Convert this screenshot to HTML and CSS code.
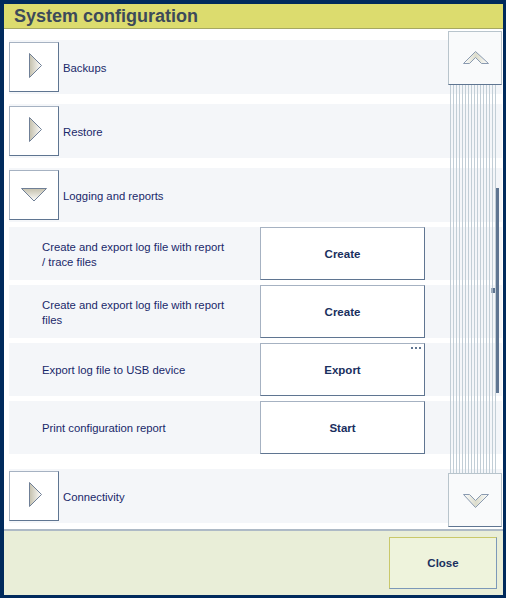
FILE: index.html
```html
<!DOCTYPE html>
<html>
<head>
<meta charset="utf-8">
<link rel="stylesheet" href="styles.css">
</head>
<body>
<div class="frame">
  <header class="titlebar">System configuration</header>
  <main class="content">
    <div class="list">
      <div class="row">
        <button class="exp"><svg width="48" height="48" viewBox="0 0 48 48"><defs><linearGradient id="gr1" x1="0" x2="1" y1="0" y2="0"><stop offset="0" stop-color="#c4c0ac"/><stop offset="1" stop-color="#ffffff"/></linearGradient></defs><polygon points="19.5,10.5 31.5,22.5 19.5,34.5" fill="url(#gr1)" stroke="#6f7f96" stroke-width="1"/></svg></button>
        <span class="label">Backups</span>
      </div>
      <div class="row">
        <button class="exp"><svg width="48" height="48" viewBox="0 0 48 48"><polygon points="19.5,10.5 31.5,22.5 19.5,34.5" fill="url(#gr1)" stroke="#6f7f96" stroke-width="1"/></svg></button>
        <span class="label">Restore</span>
      </div>
      <div class="row row-open">
        <button class="exp"><svg width="48" height="48" viewBox="0 0 48 48"><defs><linearGradient id="gr2" x1="0" x2="0" y1="0" y2="1"><stop offset="0" stop-color="#c4c0ac"/><stop offset="1" stop-color="#ffffff"/></linearGradient></defs><polygon points="11.5,17.5 36.5,17.5 24,30" fill="url(#gr2)" stroke="#6f7f96" stroke-width="1"/></svg></button>
        <span class="label">Logging and reports</span>
      </div>
      <div class="sub">
        <div class="subrow">
          <span class="sublabel">Create and export log file with report<br>/ trace files</span>
          <button class="act">Create</button>
        </div>
        <div class="subrow">
          <span class="sublabel">Create and export log file with report<br>files</span>
          <button class="act">Create</button>
        </div>
        <div class="subrow">
          <span class="sublabel">Export log file to USB device</span>
          <button class="act act-more">Export<span class="dots"><i></i><i></i><i></i></span></button>
        </div>
        <div class="subrow">
          <span class="sublabel">Print configuration report</span>
          <button class="act">Start</button>
        </div>
      </div>
      <div class="row">
        <button class="exp"><svg width="48" height="48" viewBox="0 0 48 48"><polygon points="19.5,10.5 31.5,22.5 19.5,34.5" fill="url(#gr1)" stroke="#6f7f96" stroke-width="1"/></svg></button>
        <span class="label">Connectivity</span>
      </div>
    </div>
    <div class="scrollbar">
      <button class="sbtn sbtn-up"><svg width="52" height="52" viewBox="0 0 52 52"><defs><linearGradient id="gr3" x1="0" x2="1" y1="0" y2="0"><stop offset="0" stop-color="#ffffff"/><stop offset="0.5" stop-color="#dcdccc"/><stop offset="1" stop-color="#ffffff"/></linearGradient></defs><polygon points="14.5,31.5 26.5,19.5 39.5,31.5 32.5,31.5 26.5,25.5 20.5,31.5" fill="url(#gr3)" stroke="#8a9ab0" stroke-width="1"/></svg></button>
      <div class="track">
        <div class="thumb"></div>
        <div class="grip"></div>
      </div>
      <button class="sbtn sbtn-down"><svg width="52" height="52" viewBox="0 0 52 52"><polygon points="14.5,20.5 20.5,20.5 26.5,26.5 32.5,20.5 39.5,20.5 26.5,33.5" fill="url(#gr3)" stroke="#8a9ab0" stroke-width="1"/></svg></button>
    </div>
  </main>
  <footer class="footer">
    <button class="close">Close</button>
  </footer>
</div>
</body>
</html>
```
FILE: styles.css
```css
* { box-sizing: border-box; }
html, body { margin: 0; padding: 0; background: #002a5c; }
body { width: 506px; height: 598px; overflow: hidden; font-family: "Liberation Sans", Arial, sans-serif; }
button { font-family: inherit; padding: 0; margin: 0; cursor: default; }

.frame {
  width: 506px; height: 598px;
  border-style: solid; border-color: #002a5c;
  border-width: 4px 3px 3px 4px;
  display: flex; flex-direction: column;
  background: #ffffff;
}

.titlebar {
  height: 25px;
  background: #dcdc6e;
  border-bottom: 1px solid #a6a862;
  color: #3c4a5a;
  font-weight: bold;
  font-size: 18px;
  line-height: 25px;
  padding-left: 10px;
}

.content {
  position: relative;
  height: 500px;
  overflow: hidden;
  background: #ffffff;
}

.list {
  padding: 11px 1px 0 5px;
  display: flex; flex-direction: column;
}

.row {
  height: 54px;
  background: #f4f6f9;
  display: flex; align-items: center;
  margin-bottom: 10px;
}
.row-open { margin-bottom: 5px; }

.exp {
  width: 50px; height: 50px;
  background: #ffffff;
  border-style: solid; border-width: 1px;
  border-color: #a6b2c2 #5f7591 #5f7591 #a6b2c2;
  display: flex; align-items: center; justify-content: center;
}
.exp svg { display: block; }

.label {
  margin-left: 4px;
  padding-top: 2px;
  font-size: 11.3px;
  color: #19286a;
}

.sub { display: flex; flex-direction: column; margin-bottom: 10px; }

.subrow {
  height: 53px;
  background: #f4f6f9;
  display: grid;
  grid-template-columns: 251px 165px;
  align-items: center;
  margin-bottom: 5px;
}

.sublabel {
  padding-left: 33px;
  padding-top: 2px;
  font-size: 11.3px;
  line-height: 15px;
  color: #19286a;
}

.act {
  position: relative;
  height: 53px;
  background: #ffffff;
  border-style: solid; border-width: 1px;
  border-color: #a6b2c2 #5f7591 #5f7591 #a6b2c2;
  font-weight: bold;
  font-size: 11.5px;
  color: #1a2f5e;
}

.dots {
  position: absolute; top: 3px; right: 3px;
  display: flex; gap: 2px;
}
.dots i { display: block; width: 2px; height: 2px; background: #5f7591; }

.scrollbar {
  position: absolute;
  left: 444px; top: 2px;
  width: 54px; height: 496px;
  display: flex; flex-direction: column;
}

.sbtn {
  width: 54px; height: 54px;
  background: #f9fafb;
  border: 1px solid #b8c4cc;
  border-bottom-color: #5f7591;
  display: flex; align-items: center; justify-content: center;
  flex: none;
}
.sbtn svg { display: block; }

.track {
  position: relative;
  flex: 1;
  margin-left: 2px; width: 48px;
  background: repeating-linear-gradient(90deg, #c2ced6 0 1px, transparent 1px 3px);
}

.thumb {
  position: absolute;
  left: 46px; top: 103px;
  width: 3px; height: 205px;
  background: #5f7591;
}

.grip {
  position: absolute;
  left: 41px; top: 203px;
  width: 4px; height: 5px;
  background: linear-gradient(90deg, #9eaebe 0 2px, #5f7591 2px 4px);
}

.footer {
  flex: 1;
  background: #e9eed8;
  border-top: 2px solid #aebac6;
  display: flex; justify-content: flex-end; align-items: flex-start;
  padding: 6px 6px 0 0;
}

.close {
  width: 108px; height: 52px;
  background: #eef3dc;
  border-style: solid; border-width: 1px;
  border-color: #c9c86a #7c98b8 #7c98b8 #c9c86a;
  font-weight: bold;
  font-size: 11.5px;
  color: #1a2f5e;
}
```
